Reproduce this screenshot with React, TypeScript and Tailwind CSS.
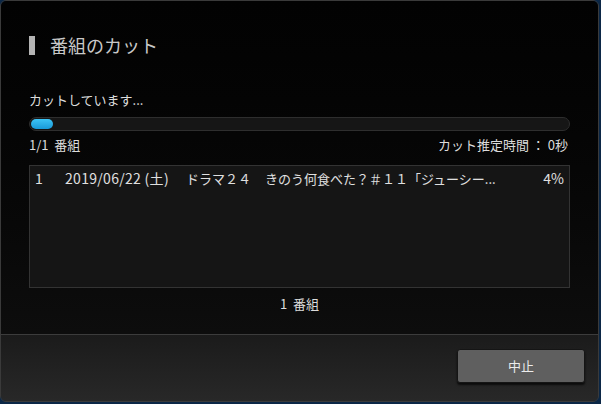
const font = { fontFamily: '"Noto Sans CJK JP", "Noto Sans", sans-serif' };

export default function App() {
  return (
    <div className="w-[601px] h-[404px] bg-[#0b2746] overflow-hidden" style={font}>
      <div className="w-[599px] h-[402px] flex flex-col rounded-[6px] border border-[#3a3a3a] overflow-hidden">
        {/* body */}
        <div className="flex-1 flex flex-col px-[28px] bg-gradient-to-b from-[#020202] to-[#0d0d0d]">
          <div className="flex items-center gap-[15px] mt-[34px] h-[20px]">
            <div className="w-[6px] h-[19px] bg-[#b4b4b4]" />
            <h1 className="text-[18px] leading-none text-[#c9c9c9]">番組のカット</h1>
          </div>

          <div className="mt-[38px] text-[13px] leading-none text-[#dcdcdc]">カットしています...</div>

          <div className="mt-[11px] h-[14px] rounded-full border border-[#2e2e2e] bg-[#161616] p-[1px] flex">
            <div className="w-[22px] rounded-full bg-gradient-to-b from-[#3cc4f5] to-[#1799d8]" />
          </div>

          <div className="mt-[7px] flex justify-between text-[13px] leading-none text-[#dcdcdc]">
            <span>1/1&nbsp; 番組</span>
            <span className="pr-[2px]">カット推定時間 ： 0秒</span>
          </div>

          <div className="mt-[14px] h-[123px] border border-[#333] bg-[#151515] px-[5px] pt-[5px]">
            <div className="flex items-baseline leading-none text-[#e0e0e0] whitespace-nowrap">
              <span className="w-[30px] text-[14px]">1</span>
              <span className="w-[121px] text-[14px] tracking-[0.3px]">2019/06/22 (土)</span>
              <span className="w-[79px] text-[13px]">ドラマ２４</span>
              <span className="flex-1 text-[13px]">きのう何食べた？＃１１「ジューシー...</span>
              <span className="text-[14px]">4%</span>
            </div>
          </div>

          <div className="mt-[9px] text-center text-[13px] leading-none text-[#dcdcdc]">1&nbsp; 番組</div>
        </div>

        {/* footer */}
        <div className="h-[67px] border-t border-[#3c3c3c] bg-gradient-to-b from-[#1b1b1b] to-[#282828] flex items-start justify-end pr-[13px] pt-[14px]">
          <button className="w-[128px] h-[34px] rounded-[3px] border border-[#151515] bg-[#5f5f5f] text-[13px] text-[#ececec] shadow-[0_2px_2px_rgba(0,0,0,0.7)]">
            中止
          </button>
        </div>
      </div>
    </div>
  );
}
